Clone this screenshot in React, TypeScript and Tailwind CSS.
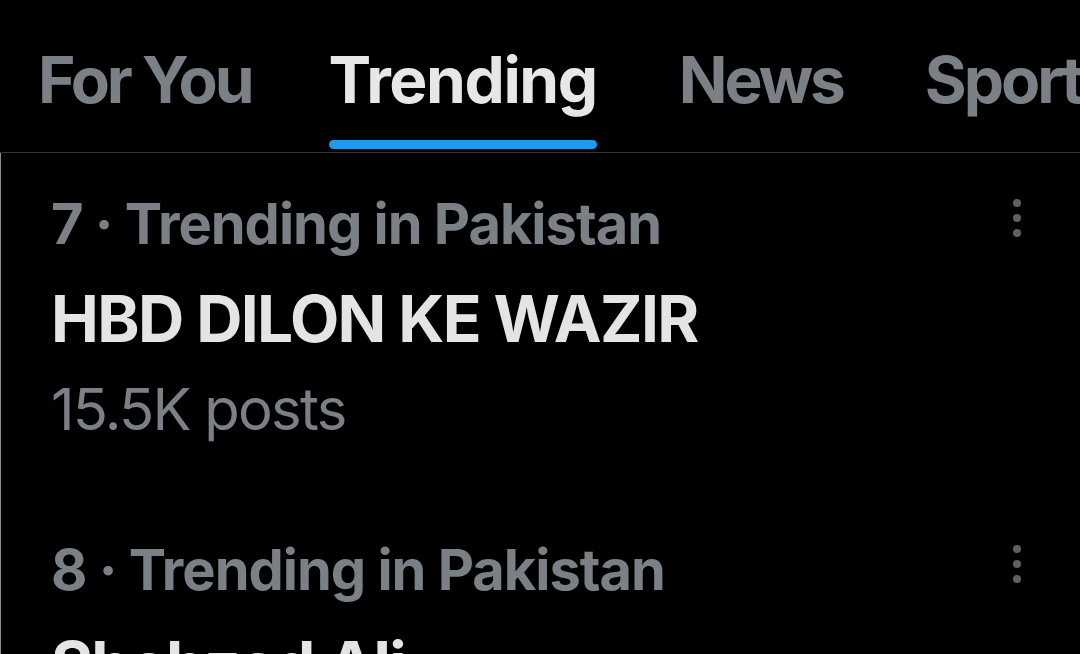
import React from 'react'

const TABS = [
  { label: 'For You', space: 'mr-[77px]' },
  { label: 'Trending', space: 'mr-[82px]' },
  { label: 'News', space: 'mr-[82px]' },
  { label: 'Sports', space: '' },
]

const TRENDS = [
  { rank: 7, where: 'Trending in Pakistan', title: 'HBD DILON KE WAZIR', posts: '15.5K posts' },
  { rank: 8, where: 'Trending in Pakistan', title: 'Shehzad Ali', posts: '12.1K posts' },
]

const font = { fontFamily: 'Inter, "Noto Sans", sans-serif' }

function Dots() {
  return (
    <div className="mt-[2px] flex flex-col gap-[7px] pt-[1px]">
      <span className="block h-[8px] w-[8px] rounded-full bg-[#5f6064]" />
      <span className="block h-[8px] w-[8px] rounded-full bg-[#5f6064]" />
      <span className="block h-[8px] w-[8px] rounded-full bg-[#5f6064]" />
    </div>
  )
}

export default function App() {
  return (
    <div className="h-[654px] w-[1080px] overflow-hidden bg-black" style={font}>
      {/* Tab strip */}
      <div className="flex h-[153px] border-b border-[#2f3336] pl-[38px] whitespace-nowrap">
        {TABS.map((t) => {
          const active = t.label === 'Trending'
          return (
            <div key={t.label} className={`flex flex-col pt-[48px] ${t.space}`}>
              <span
                className={`text-[64px] font-bold leading-[64px] ${
                  active ? 'tracking-[-0.022em] text-[#e7e7e7]' : 'tracking-[-0.048em] text-[#7b8087]'
                }`}
              >
                {t.label}
              </span>
              <span
                className={`mt-[28px] block h-[9px] rounded-full ${
                  active ? 'bg-[#1d9bf0]' : 'bg-transparent'
                }`}
              />
            </div>
          )
        })}
      </div>

      {/* Trend list */}
      <div className="border-l border-[#8a8a8a]">
        {TRENDS.map((tr) => (
          <div key={tr.rank} className="h-[346px] pl-[50px] pr-[59px] pt-[43px]">
            <div className="flex items-start justify-between">
              <span className="text-[56px] font-bold leading-[56px] tracking-[-0.018em] text-[#7b8087]">
                {tr.rank} · {tr.where}
              </span>
              <Dots />
            </div>
            <div className="mt-[35px] text-[64px] font-bold leading-[64px] tracking-[-0.025em] text-[#e4e4e4]">
              {tr.title}
            </div>
            <div className="mt-[29px] text-[58px] leading-[58px] tracking-[-0.03em] text-[#7b8087]">
              {tr.posts}
            </div>
          </div>
        ))}
      </div>
    </div>
  )
}
